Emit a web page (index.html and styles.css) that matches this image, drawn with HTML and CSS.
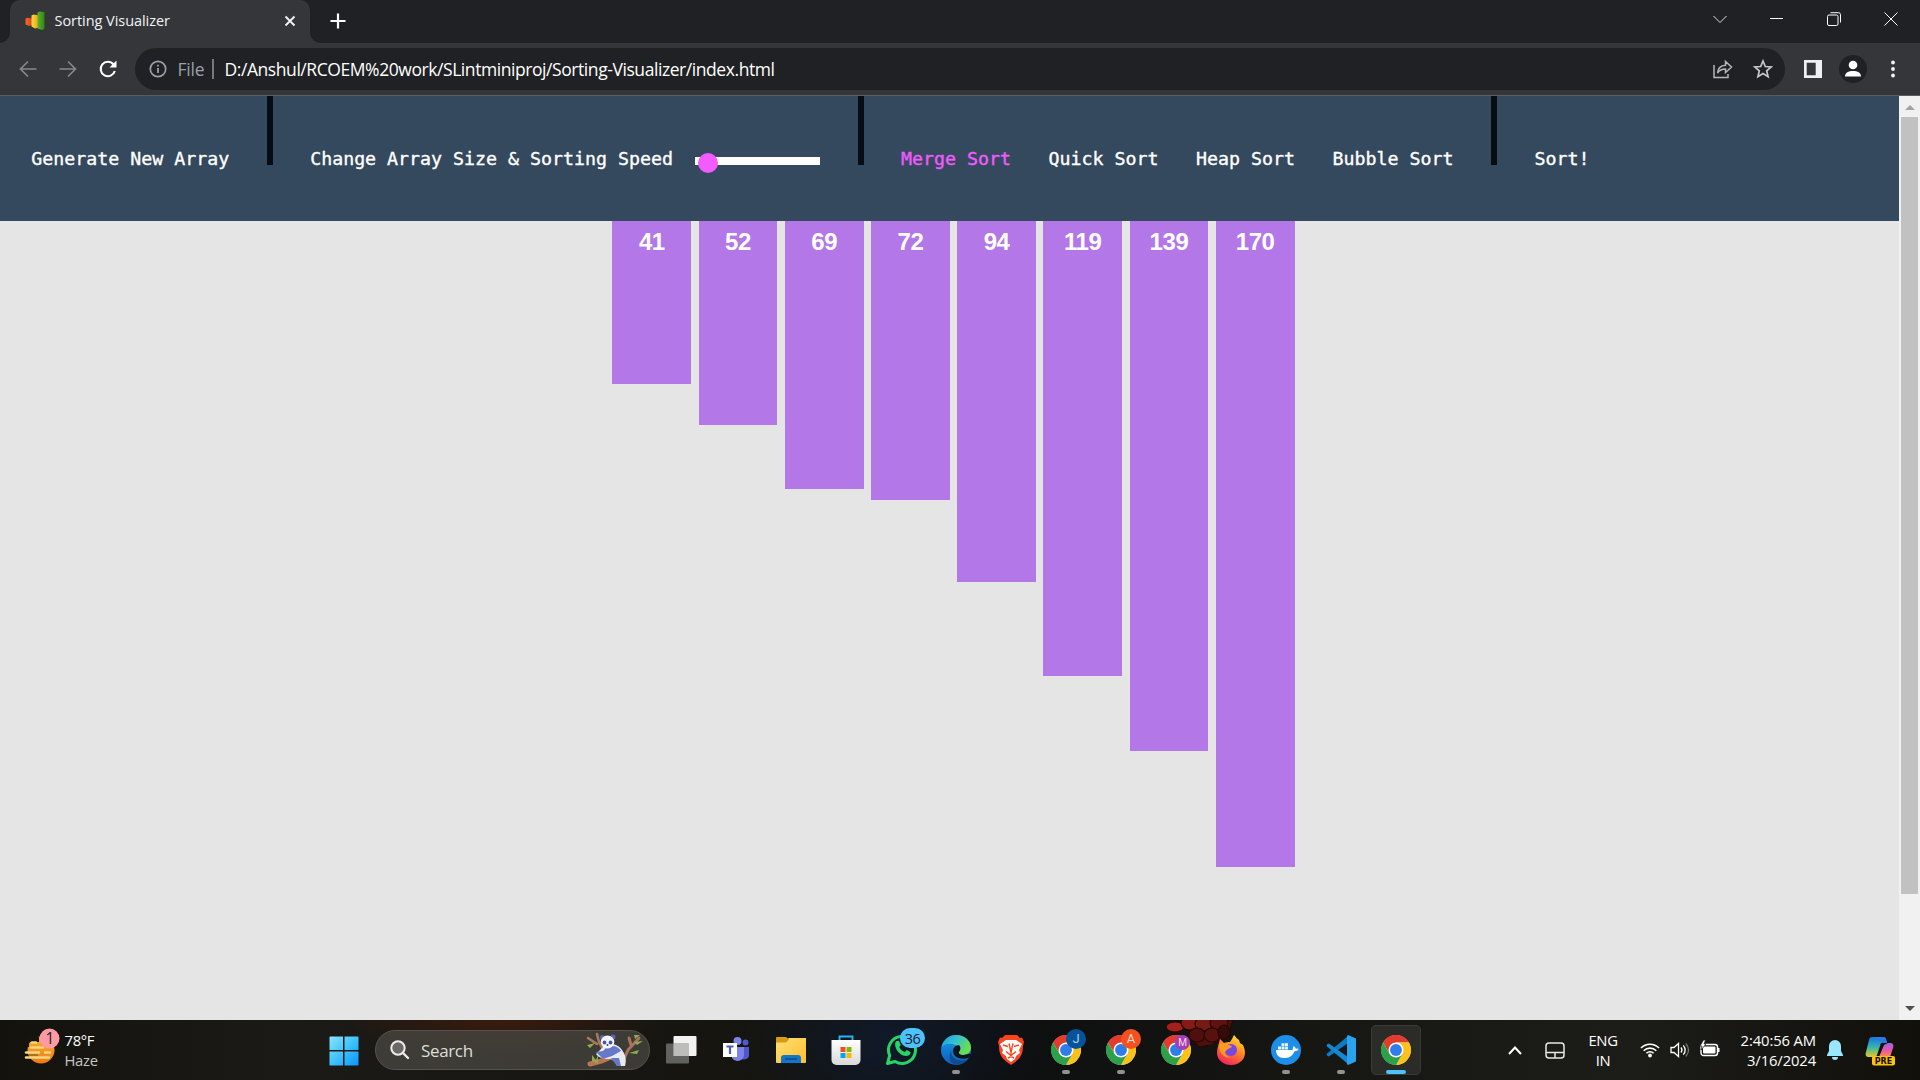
FILE: index.html
```
<!DOCTYPE html>
<html lang="en">
<head>
<meta charset="utf-8">
<title>Sorting Visualizer</title>
<link rel="stylesheet" href="styles.css">
</head>
<body>
<svg class="defs" width="0" height="0" aria-hidden="true">
  <defs>
    <linearGradient id="winGrad" x1="0" y1="0" x2="1" y2="1"><stop offset="0" stop-color="#8be3ff"/><stop offset=".5" stop-color="#3fc3fb"/><stop offset="1" stop-color="#0a94fb"/></linearGradient>
    <linearGradient id="sunGrad" x1="0" y1="0" x2="0" y2="1"><stop offset="0" stop-color="#f7b32d"/><stop offset="1" stop-color="#ee7a12"/></linearGradient>
    <linearGradient id="folderGrad" x1="0" y1="0" x2="1" y2="1"><stop offset="0" stop-color="#ffdf76"/><stop offset="1" stop-color="#fdc02e"/></linearGradient>
    <linearGradient id="storeGrad" x1="0" y1="0" x2="0" y2="1"><stop offset="0" stop-color="#fff"/><stop offset="1" stop-color="#d9d9d9"/></linearGradient>
    <linearGradient id="edgeTop" x1="0" y1="0" x2="1" y2=".5"><stop offset="0" stop-color="#1b9de2"/><stop offset=".5" stop-color="#35c1cf"/><stop offset="1" stop-color="#6be04c"/></linearGradient>
    <linearGradient id="edgeMid" x1="0" y1="0" x2="0" y2="1"><stop offset="0" stop-color="#1a9ae4"/><stop offset="1" stop-color="#0a5fc0"/></linearGradient>
    <linearGradient id="foxGrad" x1=".8" y1="0" x2=".3" y2="1"><stop offset="0" stop-color="#ffe83a"/><stop offset=".45" stop-color="#ff8a21"/><stop offset="1" stop-color="#f2205f"/></linearGradient>
    <linearGradient id="copA" x1="0" y1="0" x2="0" y2="1"><stop offset="0" stop-color="#1b6fe0"/><stop offset=".5" stop-color="#33b5b0"/><stop offset="1" stop-color="#e8c81f"/></linearGradient>
    <linearGradient id="copB" x1="0" y1="0" x2="0" y2="1"><stop offset="0" stop-color="#9a62f0"/><stop offset=".5" stop-color="#e957a6"/><stop offset="1" stop-color="#ff8a4c"/></linearGradient>
    <linearGradient id="barR" x1="0" y1="0" x2="1" y2="0"><stop offset="0" stop-color="#f06a28"/><stop offset="1" stop-color="#d94816"/></linearGradient>
    <linearGradient id="barY" x1="0" y1="0" x2="1" y2="0"><stop offset="0" stop-color="#ffd23b"/><stop offset="1" stop-color="#eda91b"/></linearGradient>
    <linearGradient id="barG" x1="0" y1="0" x2="1" y2="0"><stop offset="0" stop-color="#5ab52a"/><stop offset="1" stop-color="#2f8611"/></linearGradient>
    <symbol id="chrome" viewBox="0 0 48 48">
      <circle cx="24" cy="24" r="23.500" fill="#fff"/>
      <path d="M24 12h20.8A24 24 0 0 0 3.2 12l10.4 18z" fill="#e33b2e"/>
      <path d="M34.4 30 24 48A24 24 0 0 0 44.8 12H24z" fill="#fcc21b"/>
      <path d="M13.6 30 3.2 12A24 24 0 0 0 24 48l10.4-18z" fill="#2da04a"/>
      <circle cx="24" cy="24" r="12" fill="#fff"/>
      <circle cx="24" cy="24" r="9.5" fill="#2f7de9"/>
    </symbol>
  </defs>
</svg>

<header class="tabstrip">
  <div class="tab">
    <svg class="favicon" viewBox="0 0 20 20"><path d="M.5 7.500L3 6.800l4 .7v6.500l-3 1L.5 13.500z" fill="url(#barR)"/><path d="M6.500 4.500l2-1 4.500.7v12.500l-3 .8-3.500-2z" fill="url(#barY)"/><path d="M12.500 1.500l2.500-1 4.500.8v16.500l-2.500 1.200-4.500-1.500z" fill="url(#barG)"/></svg>
    <span class="tab-title">Sorting Visualizer</span>
    <svg class="tab-close" viewBox="0 0 12 12"><path d="M1.500 1.500l9 9m0-9l-9 9" stroke="#f1f3f4" stroke-width="1.900"/></svg>
  </div>
  <svg class="new-tab" viewBox="0 0 16 16"><path d="M8 .5v15M.5 8h15" stroke="#fff" stroke-width="2.200"/></svg>
  <div class="window-controls">
    <svg viewBox="0 0 14 14"><path d="M.5 4l6.500 6.500L13.500 4" fill="none" stroke="#ddd"/></svg>
    <svg viewBox="0 0 14 14"><path d="M0 6.500h13" stroke="#fff"/></svg>
    <svg viewBox="0 0 14 14"><rect x=".5" y="3" width="10.500" height="10.500" rx="1.500" fill="none" stroke="#fff"/><path d="M3.500 .7H11.500a2 2 0 0 1 2 2V10.500" fill="none" stroke="#fff"/></svg>
    <svg viewBox="0 0 14 14"><path d="M.5.5l13 13m0-13l-13 13" stroke="#fff"/></svg>
  </div>
</header>

<div class="toolbar">
  <svg class="nav-icon" viewBox="0 0 18 18"><path d="M17.500 9H2M9 1.500L1.500 9 9 16.500" fill="none" stroke="#86888b" stroke-width="1.700"/></svg>
  <svg class="nav-icon" viewBox="0 0 18 18"><path d="M.5 9H16M9 1.500L16.500 9 9 16.500" fill="none" stroke="#86888b" stroke-width="1.700"/></svg>
  <svg class="nav-icon" viewBox="0 0 18 18"><path d="M15.800 11A7.200 7.200 0 1 1 14.500 4.500" fill="none" stroke="#fff" stroke-width="2.100"/><path d="M17.500 .6V7.500H10.500z" fill="#fff"/></svg>
  <div class="omnibox">
    <svg class="info" viewBox="0 0 18 18"><circle cx="9" cy="9" r="7.700" fill="none" stroke="#9aa0a6" stroke-width="1.700"/><path d="M9 8v5M9 4.800v1.800" stroke="#9aa0a6" stroke-width="1.800"/></svg>
    <span class="scheme">File</span>
    <span class="divider"></span>
    <span class="url">D:/Anshul/RCOEM%20work/SLintminiproj/Sorting-Visualizer/index.html</span>
    <svg class="share" viewBox="0 0 20 20"><path d="M1 6v12.500h14V15" fill="none" stroke="#b4b6b8" stroke-width="1.500"/><path d="M4.500 14C5 9 8 6.500 12.500 6.300V2.500L18.500 8l-6 5.500V10C9 10 6.500 11 4.500 14z" fill="none" stroke="#b4b6b8" stroke-width="1.500"/></svg>
    <svg class="star" viewBox="0 0 20 20"><path d="M10 2l2.300 5.500 5.900.5-4.500 3.900 1.400 5.800L10 14.600l-5.100 3.100 1.400-5.800L1.800 8l5.900-.5z" fill="none" stroke="#c6c8ca" stroke-width="1.700"/></svg>
  </div>
  <svg class="panel" viewBox="0 0 18 18"><path d="M0 0h18v18H0zM2.700 2.700v12.600h9V2.700z" fill="#eef0f3" fill-rule="evenodd"/></svg>
  <svg class="avatar" viewBox="0 0 28 28"><circle cx="14" cy="14" r="14" fill="#202124"/><circle cx="14" cy="10" r="4.300" fill="#fff"/><path d="M6 21.500c0-4 3.500-5.500 8-5.500s8 1.500 8 5.500z" fill="#fff"/></svg>
  <svg class="dots" viewBox="0 0 4 18"><circle cx="2" cy="2.500" r="1.900" fill="#f1f3f4"/><circle cx="2" cy="9" r="1.900" fill="#f1f3f4"/><circle cx="2" cy="15.500" r="1.900" fill="#f1f3f4"/></svg>
</div>

<div class="viewport">
  <main class="page">
    <nav class="navbar">
      <a class="item">Generate New Array</a>
      <span class="sep"></span>
      <span class="item">Change Array Size &amp; Sorting Speed</span>
      <span class="slider"><span class="thumb"></span></span>
      <span class="sep"></span>
      <a class="item selected">Merge Sort</a>
      <a class="item">Quick Sort</a>
      <a class="item">Heap Sort</a>
      <a class="item">Bubble Sort</a>
      <span class="sep"></span>
      <a class="item">Sort!</a>
    </nav>
    <section class="chart">
      <div class="bar" style="height:163px">41</div>
      <div class="bar" style="height:204px">52</div>
      <div class="bar" style="height:268px">69</div>
      <div class="bar" style="height:279px">72</div>
      <div class="bar" style="height:361px">94</div>
      <div class="bar" style="height:455px">119</div>
      <div class="bar" style="height:530px">139</div>
      <div class="bar" style="height:646px">170</div>
    </section>
  </main>
  <div class="scrollbar">
    <svg class="arrow" viewBox="0 0 10 5"><path d="M0 5L5 0l5 5z" fill="#a3a3a3"/></svg>
    <div class="scroll-thumb"></div>
    <svg class="arrow" viewBox="0 0 10 5"><path d="M0 0l5 5 5-5z" fill="#505050"/></svg>
  </div>
</div>

<footer class="taskbar">
  <svg class="wallpaper" viewBox="0 0 80 28"><g stroke="#2a0705" stroke-width="1.200"><path d="M20 0H66l-4 12-8 8-10 5-12 2-8-8z" fill="#4d100d"/><ellipse cx="8" cy="7" rx="9" ry="5" fill="#a5201b"/><ellipse cx="23" cy="3" rx="9" ry="7" fill="#851a16"/><ellipse cx="37" cy="4" rx="9" ry="7" fill="#761a16"/><ellipse cx="52" cy="3" rx="9" ry="7" fill="#5e120f"/><ellipse cx="30" cy="15" rx="8" ry="7" fill="#4f100d"/><ellipse cx="45" cy="15" rx="8" ry="7" fill="#56120e"/><ellipse cx="57" cy="12" rx="6" ry="7" fill="#360b09"/></g></svg>
  <div class="weather">
    <svg class="haze" viewBox="0 0 34 38"><circle cx="16" cy="22" r="13.500" fill="url(#sunGrad)"/><path d="M0 9h14v5H4v5H0z" fill="#15140f"/><path d="M7 14.500h4M6 19.500h12M1 24.500h13M20 24.500h5M1 29.500h23" stroke="#f5d583" stroke-width="2.600" stroke-linecap="round"/><path d="M4 27h9" stroke="#8a5a1a" stroke-width="1.200"/><circle cx="24.500" cy="10.500" r="10" fill="#ff99a4"/><text x="25" y="16" class="badge-text">1</text></svg>
    <div class="weather-text"><span>78°F</span><span class="muted">Haze</span></div>
  </div>
  <svg class="start" viewBox="0 0 30 30"><path d="M1 .5h13V14H.5V1zM15.500.5H29l.5.500V14h-14zM.5 15.500H14v14H1l-.5-.5zM15.500 15.500h14v13.500l-.5.500H15.500z" fill="url(#winGrad)"/></svg>
  <div class="search">
    <svg class="glass" viewBox="0 0 20 20"><circle cx="8" cy="8" r="6.700" fill="#6b6965" stroke="#eee" stroke-width="2"/><path d="M13 13l5 5" stroke="#eee" stroke-width="2.400" stroke-linecap="round"/></svg>
    <span>Search</span>
    <svg class="panda" viewBox="0 0 60 34">
      <g stroke-linecap="round" fill="none"><path d="M12 1l2 8 7 13M3 5l9 6" stroke="#a9795c" stroke-width="2.600"/><path d="M5 31l12-3 9-4 10 5" stroke="#bc7352" stroke-width="5"/><path d="M38 28l5-11 11-12M46 12l-2-7" stroke="#a9735b" stroke-width="3"/></g>
      <g fill="#8eaa52"><path d="M2 12l8-2-5 5zM7 22l4 5 2-5 0 9-6-3zM49 9l9-1-6 4zM44 20l10-3-2 4zM49 2l6 0-5 4z"/></g>
      <path d="M20 12c6-2 13-1 17 5 5 7 4 12 3 16h-8c-1-4-3-8-8-7-6 0-10-1-13-5z" fill="#e9e9f2"/><path d="M22 14c6-2 11-1 14 4l-9 5-9 3-7-7 7-1zM26 25l8 0 2 8h-4z" fill="#6579c9"/>
      <circle cx="17.500" cy="4.500" r="2.500" fill="#5068ba"/><circle cx="28" cy="4" r="2.500" fill="#5068ba"/><ellipse cx="22.500" cy="9" rx="6.800" ry="6.500" fill="#f4f5fb"/><circle cx="19.500" cy="9.500" r="1.900" fill="#4359ac"/><circle cx="25.500" cy="9.500" r="1.900" fill="#4359ac"/><circle cx="22.500" cy="12" r="1" fill="#333f77"/>
    </svg>
  </div>
  <div class="apps">
    <div class="app"><svg viewBox="0 0 30 30"><rect x="7.500" y="1" width="23" height="20" rx="1" fill="#f2f2f2"/><rect x="0" y="8.500" width="23" height="20" rx="1" fill="#6f6f6d" fill-opacity=".85"/><path d="M7.500 8.500H23V21H7.500z" fill="#bdbdbb"/></svg></div>
    <div class="app"><svg viewBox="0 0 30 30"><circle cx="24.500" cy="7.500" r="3" fill="#5059c9"/><path d="M21 12h7v9a5 5 0 0 1-7 3z" fill="#5059c9"/><circle cx="16.500" cy="6" r="4" fill="#7b83eb"/><path d="M11 12h12v8a6.500 6.500 0 0 1-12 3z" fill="#7b83eb"/><rect x="2" y="8" width="14" height="14" fill="#fff"/><path d="M5.500 11.500h7M9 11.500V19" stroke="#5059b9" stroke-width="2.200"/></svg></div>
    <div class="app"><svg viewBox="0 0 30 30"><path d="M0 3.500C0 2.500.7 2 1.500 2H10l3 3h-13z" fill="#e0a319"/><path d="M0 5h10l3-2h17v24a1 1 0 0 1-1 1H1a1 1 0 0 1-1-1z" fill="url(#folderGrad)"/><path d="M0 2.500h10l3 2-3 3H0z" fill="#d69a17"/><path d="M5 28v-5a3 3 0 0 1 3-3h14a3 3 0 0 1 3 3v5z" fill="#1475c4"/><path d="M9 24h12" stroke="#0b4b8d" stroke-width="1.500"/></svg></div>
    <div class="app"><svg viewBox="0 0 30 30"><path d="M8.500 6V1.500h13V6" fill="none" stroke="#25b6ef" stroke-width="1.900"/><path d="M.5 5h29v20a5 5 0 0 1-5 5H5.500a5 5 0 0 1-5-5z" fill="url(#storeGrad)"/><path d="M9.500 12h5v5h-5z" fill="#f04e24"/><path d="M15.500 12h5v5h-5z" fill="#80bb0a"/><path d="M9.500 18h5v5h-5z" fill="#02a4ef"/><path d="M15.500 18h5v5h-5z" fill="#fbb702"/></svg></div>
    <div class="app"><svg class="wide" viewBox="0 0 40 38"><path d="M1.500 35.500l2.200-8A13.500 13.500 0 1 1 9 33.500z" fill="none" stroke="#27d366" stroke-width="3" stroke-linejoin="round"/><path d="M9 16c0-3 3-4 4-3l1.800 4-1.500 2c1.500 3 3 4 5.500 5l2-2 3.500 2c1 1-1 4-4 4-6 0-11-6-11.300-12z" fill="#27d366"/><rect x="14" y="0" width="25" height="20" rx="10" fill="#4cc2ff"/><text x="26.500" y="15.500" class="badge-text narrow">36</text></svg></div>
    <div class="app running"><svg viewBox="0 0 30 30"><circle cx="15" cy="15" r="15" fill="url(#edgeMid)"/><path d="M.5 12.500C2 5 8 0 15 0c9 0 15 6 15 12.500 0 5-4 7.500-8 7.500-3.500 0-5-1.500-4.500-3 1.500-2 1-6-3-7C9 8 3 8.500.5 12.500z" fill="url(#edgeTop)"/><path d="M10.500 15c-1.500 7 5 12 15.500 10-3 3.500-7 5-11 5-5-1-9-7-4.500-15z" fill="#134b91"/><path d="M18.500 10.500c-4-1.500-8 4-6 8 2 5 9 6.500 16 4l1-4-7 1.500c-4 0-5-1.500-4.500-3 1.500-2 2-4 .5-6.500z" fill="#10141c"/></svg></div>
    <div class="app"><svg viewBox="0 0 30 30"><path d="M9 0h12l3 3 2-.5 2 4.500-1 4c0 9-3 13-12 19C6 24 3 20 3 11L2 7l2-4.500L6 3z" fill="#f9441f"/><path d="M10 5h10l6 4-3 6 1 3-4 3-1 3-4 3-4-3-1-3-4-3 1-3-3-6z" fill="#fff"/><path d="M7 10l5 1.500M23 10l-5 1.500M13 8.500l2 9 2-9M10 16.500l5 4 5-4M15 17v4M12 23l3-1.500 3 1.500" fill="none" stroke="#f9441f" stroke-width="1.400"/></svg></div>
    <div class="app running"><svg><use href="#chrome"/></svg><span class="profile blue">J</span></div>
    <div class="app running"><svg><use href="#chrome"/></svg><span class="profile orange">A</span></div>
    <div class="app"><svg><use href="#chrome"/></svg><span class="profile purple">M</span></div>
    <div class="app"><svg viewBox="0 0 30 30"><path d="M3 8l1-4 4 4c2-1 4-1 6-1 2-3 3-5 4-7 2 2 3 4 5 5l1 3 3 2c1 2 2 5 2 8A14 12 0 0 1 1 18C1 14 2 11 3 8z" fill="url(#foxGrad)"/><circle cx="15" cy="15" r="6" fill="#7547e5"/><path d="M3 10c4-3 8-2 9 0l4 1c-1 3-5 2-6 5-3 1 0 6 5 6-6 2-12-3-12-12z" fill="#ff9a22"/></svg></div>
    <div class="app running"><svg viewBox="0 0 30 30"><circle cx="15" cy="15" r="15" fill="#1d8fe9"/><path d="M5 15h16.500l1-4c1 .5 2 1.500 2 2.500l3 .3c-.5 2-2 2.400-4 2.400C21 22 17 23 13 23c-5 0-8-3-8-8z" fill="#fff"/><path d="M7 11.500h3v3H7zM10.500 11.500h3v3h-3zM14 11.500h3v3h-3zM10.500 8.200h3v2.900h-3zM14 8.200h3v2.900h-3z" fill="#fff" opacity=".9"/></svg></div>
    <div class="app running"><svg viewBox="0 0 30 30"><path d="M22 1L1 18.500c-1 1 0 2.500 2 3L22 8z" fill="#0b7bc4"/><path d="M22 29L1 11.500c-1-1 0-2.500 2-3L22 22z" fill="#1489d1"/><path d="M22 0l8 3.500v23L22 30l-1-1V1z" fill="#29a3ee"/></svg></div>
    <div class="app running active"><svg><use href="#chrome"/></svg></div>
  </div>
  <div class="tray">
    <svg class="up" viewBox="0 0 14 9"><path d="M1 8l6-6.500L13 8" fill="none" stroke="#fff" stroke-width="2"/></svg>
    <svg class="pad" viewBox="0 0 20 17"><rect x="1" y="1" width="18" height="15" rx="3" fill="none" stroke="#e8e8e8" stroke-width="1.500"/><path d="M1 10.500h18M10 10.500V16" stroke="#e8e8e8" stroke-width="1.500"/></svg>
    <div class="lang"><span>ENG</span><span>IN</span></div>
    <svg class="wifi" viewBox="0 0 20 16"><path d="M1 6a12.700 12.700 0 0 1 18 0M3.700 8.700a9 9 0 0 1 12.600 0M6.400 11.300a5.100 5.100 0 0 1 7.200 0" fill="none" stroke="#fff" stroke-width="1.600"/><circle cx="10" cy="13.500" r="1.900" fill="#fff"/></svg>
    <svg class="volume" viewBox="0 0 20 16"><path d="M1 5.500h3L8.500 1.500v13l-4.500-4H1z" fill="none" stroke="#fff" stroke-width="1.300"/><path d="M11 5.500q2 2.500 0 5M13.300 3.300q3.700 4.700 0 9.400" fill="none" stroke="#fff" stroke-width="1.300"/><path d="M15.800 1.500q5.500 6.500 0 13" fill="none" stroke="#777" stroke-width="1.200"/></svg>
    <svg class="battery" viewBox="0 0 20 17"><rect x="1" y="4.500" width="16.500" height="11" rx="2.500" fill="none" stroke="#fff" stroke-width="1.400"/><rect x="3" y="6.500" width="12.500" height="7" rx="1" fill="#fff"/><path d="M18.500 8v4" stroke="#fff" stroke-width="2"/><path d="M3.500 0L0 6h2l-1 4 5-6H4l1.500-4z" fill="#fff" stroke="#1a1a18" stroke-width=".7"/></svg>
    <div class="clock"><span>2:40:56 AM</span><span>3/16/2024</span></div>
    <svg class="bell" viewBox="0 0 18 20"><path d="M9 0a6 6 0 0 1 6 6v5l2 4v1H1v-1l2-4V6a6 6 0 0 1 6-6zM6 17h6a3 3 0 0 1-6 0z" fill="#98e6ff"/></svg>
    <svg class="copilot" viewBox="0 0 30 30"><path d="M7 1h11c3 0 3 2 4 6h-6l-4 12c-1 2-2 2-4 2H4c-3 0-4-2-3-5L4 4c.5-2 1-3 3-3z" fill="url(#copA)"/><path d="M19 9l4-2h2c3 0 4 2 3 5l-3 9H14z" fill="url(#copB)"/><path d="M7 1h11c3 0 3 2 4 6h-5c-2-3-5-4-10-6z" fill="#2a78ea"/><rect x="7" y="20" width="23" height="9.500" rx="2" fill="#fdc310"/><text x="18.500" y="27.700" class="pre">PRE</text></svg>
  </div>
</footer>
</body>
</html>
```

FILE: styles.css
```
* { box-sizing: border-box; }
body {
  margin: 0;
  width: 1920px;
  height: 1080px;
  overflow: hidden;
  display: flex;
  flex-direction: column;
  background: #202124;
  font-family: "Open Sans", "Noto Sans", sans-serif;
}
svg { display: block; flex: none; overflow: visible; }
.defs { position: absolute; }

/* Tab strip */
.tabstrip { height: 43px; display: flex; align-items: flex-start; background: #202124; flex: none; }
.tab {
  position: relative;
  width: 300px;
  height: 43px;
  margin-left: 10px;
  padding: 0 14px 2px 15px;
  display: flex;
  align-items: center;
  background: #35363a;
  border-radius: 10px 10px 0 0;
}
.tab::before, .tab::after { content: ""; position: absolute; bottom: 0; width: 10px; height: 10px; }
.tab::before { left: -10px; background: radial-gradient(circle at 0 0, transparent 9.5px, #35363a 10px); }
.tab::after { right: -10px; background: radial-gradient(circle at 100% 0, transparent 9.5px, #35363a 10px); }
.favicon { width: 20px; height: 20px; margin-right: 9.5px; }
.tab-title { flex: 1; font-size: 14.5px; letter-spacing: -0.05px; color: #f1f3f4; white-space: nowrap; }
.tab-close { width: 12px; height: 12px; margin-top: 1px; }
.new-tab { width: 16px; height: 16px; margin: 13px 0 0 19.5px; }
.window-controls { margin: 12px 22px 0 auto; display: flex; gap: 43px; }
.window-controls svg { width: 14px; height: 14px; }

/* Address row */
.toolbar {
  height: 53px;
  flex: none;
  display: flex;
  align-items: center;
  padding: 0 25.5px 0 19px;
  background: #35363a;
  border-bottom: 1px solid #5b5c60;
}
.nav-icon { width: 18px; height: 18px; margin-right: 22px; }
.nav-icon:nth-child(3) { margin: 0 18px 0 -0.5px; }
.omnibox {
  width: 1650px;
  height: 42px;
  padding: 0 12px 0 14px;
  display: flex;
  align-items: center;
  border-radius: 21px;
  background: #202124;
  font-size: 17.5px;
  white-space: nowrap;
}
.info { width: 18px; height: 18px; margin-right: 11px; }
.scheme { width: 34px; color: #9aa0a6; font-size: 17.5px; letter-spacing: -0.2px; }
.divider { width: 2px; height: 20px; background: #77797d; margin-right: 11px; }
.url { flex: 1; color: #fff; letter-spacing: -0.43px; }
.share { width: 20px; height: 20px; margin-right: 20px; }
.star { width: 20px; height: 20px; }
.panel { width: 18px; height: 18px; margin-left: 19px; }
.avatar { width: 28px; height: 28px; margin-left: 17px; }
.dots { width: 4px; height: 18px; margin-left: auto; }

/* Page */
.viewport { height: 924px; flex: none; display: flex; }
.page { flex: 1; background: #e5e5e5; }
.navbar {
  height: 125px;
  display: flex;
  align-items: flex-start;
  gap: 37.5px;
  padding-left: 31.2px;
  background: #34495e;
  color: #fff;
  font: 18.27px/24px "DejaVu Sans Mono", "Liberation Mono", monospace;
  -webkit-text-stroke: 0.35px currentColor;
  white-space: nowrap;
}
.item { margin-top: 51px; }
.selected { color: #f15bff; }
.sep { width: 6px; height: 69px; background: #070d12; }
.slider { display: flow-root; width: 125px; height: 8px; margin: 61px 0 0 -15.5px; background: #fff; }
.thumb { display: block; width: 20px; height: 20px; margin: -4px 0 0 3px; border-radius: 50%; background: #f15bff; }
.chart { display: flex; justify-content: center; gap: 7.4px; padding-left: 8px; align-items: flex-start; }
.bar {
  width: 78.8px;
  padding-top: 7px;
  background: #b377e8;
  color: #fff;
  text-align: center;
  font: bold 24px/28px "Liberation Sans", Arial, sans-serif;
  letter-spacing: -0.4px;
}
.scrollbar {
  width: 21px;
  background: #f1f1f1;
  display: flex;
  flex-direction: column;
  align-items: center;
  padding: 9px 0;
}
.arrow { width: 10px; height: 5px; }
.scroll-thumb { width: 17px; height: 777px; margin-top: 7px; background: #c1c1c1; }
.arrow:last-child { margin-top: auto; }

/* Taskbar */
.taskbar {
  position: relative;
  height: 60px;
  flex: none;
  display: flex;
  align-items: center;
  color: #fff;
  background:
    radial-gradient(ellipse 160px 34px at 500px 0, #3b1b0e, transparent),
    radial-gradient(ellipse 150px 110px at 890px 20px, #101a2a, transparent),
    linear-gradient(90deg, #13120d, #1b1a16 15%, #15140f 40%, #0d0e0f 52%, #171813 70%, #1c1c18 85%, #11100b);
}
.wallpaper { position: absolute; left: 1167px; top: 0; width: 80px; height: 28px; clip-path: inset(0); }
.badge-text { font-size: 15.5px; fill: #16222a; text-anchor: middle; }
.narrow { font-size: 14.5px; letter-spacing: -0.5px; }
.weather { width: 304px; padding-left: 24.5px; display: flex; align-items: center; gap: 6px; }
.haze { width: 34px; height: 38px; margin-top: -7px; }
.weather-text, .lang, .clock { display: flex; flex-direction: column; font-size: 14.8px; line-height: 20px; }
.weather-text { letter-spacing: -0.3px; }
.muted { color: #c6c6c4; }
.start { width: 30px; height: 30px; margin: 2px 0 0 24.5px; }
.search {
  width: 275px;
  height: 40px;
  margin-left: 16.5px;
  padding: 0 4px 0 14px;
  display: flex;
  align-items: center;
  border: 1px solid #55534d;
  border-radius: 20px;
  background: rgba(75, 72, 67, .75);
  font-size: 17px;
  color: #deddda;
}
.glass { width: 20px; height: 20px; margin-right: 11px; }
.search span { flex: 1; letter-spacing: -0.35px; }
.panda { width: 60px; height: 34px; }
.apps { display: flex; margin-left: 3px; height: 60px; }
.app { position: relative; width: 55px; display: flex; align-items: center; justify-content: center; }
.app > svg { width: 30px; height: 30px; z-index: 1; }
.app .wide { width: 40px; height: 38px; margin: -6px 0 0 10px; }
.running::after {
  content: "";
  position: absolute;
  left: 23.5px;
  bottom: 6px;
  width: 8px;
  height: 4px;
  border-radius: 2px;
  background: #929291;
}
.active::before {
  content: "";
  position: absolute;
  inset: 5px 2.5px;
  border: 1px solid #393935;
  border-radius: 5px;
  background: #2b2b27;
}
.active::after { left: 17.5px; width: 20px; background: #4cc2ff; }
.profile {
  position: absolute;
  z-index: 2;
  left: 28px;
  top: 9px;
  width: 20px;
  height: 20px;
  border-radius: 50%;
  text-align: center;
  font: 13px/20px Roboto, sans-serif;
  color: #f4dcd5;
}
.blue { background: #05549a; color: #a8cff0; }
.orange { background: #f4511e; }
.purple { background: #a33db9; left: 27px; top: 15px; width: 15px; height: 15px; font-size: 10px; line-height: 15px; }
.tray { display: flex; align-items: center; margin: 0 25px 0 auto; }
.up { width: 14px; height: 9px; }
.pad { width: 20px; height: 17px; margin-left: 23px; }
.lang { width: 40px; margin-left: 18px; text-align: center; letter-spacing: -0.3px; }
.wifi { width: 20px; height: 16px; margin-left: 17px; }
.volume { width: 20px; height: 16px; margin-left: 10px; }
.battery { width: 20px; height: 17px; margin: -3px 0 0 10px; }
.clock { width: 96px; text-align: right; letter-spacing: -0.12px; white-space: nowrap; }
.bell { width: 18px; height: 20px; margin-left: 10px; }
.copilot { width: 30px; height: 30px; margin: 2px 0 0 21px; }
.pre { font: bold 8px "DejaVu Sans", sans-serif; text-anchor: middle; fill: #171000; }
```
